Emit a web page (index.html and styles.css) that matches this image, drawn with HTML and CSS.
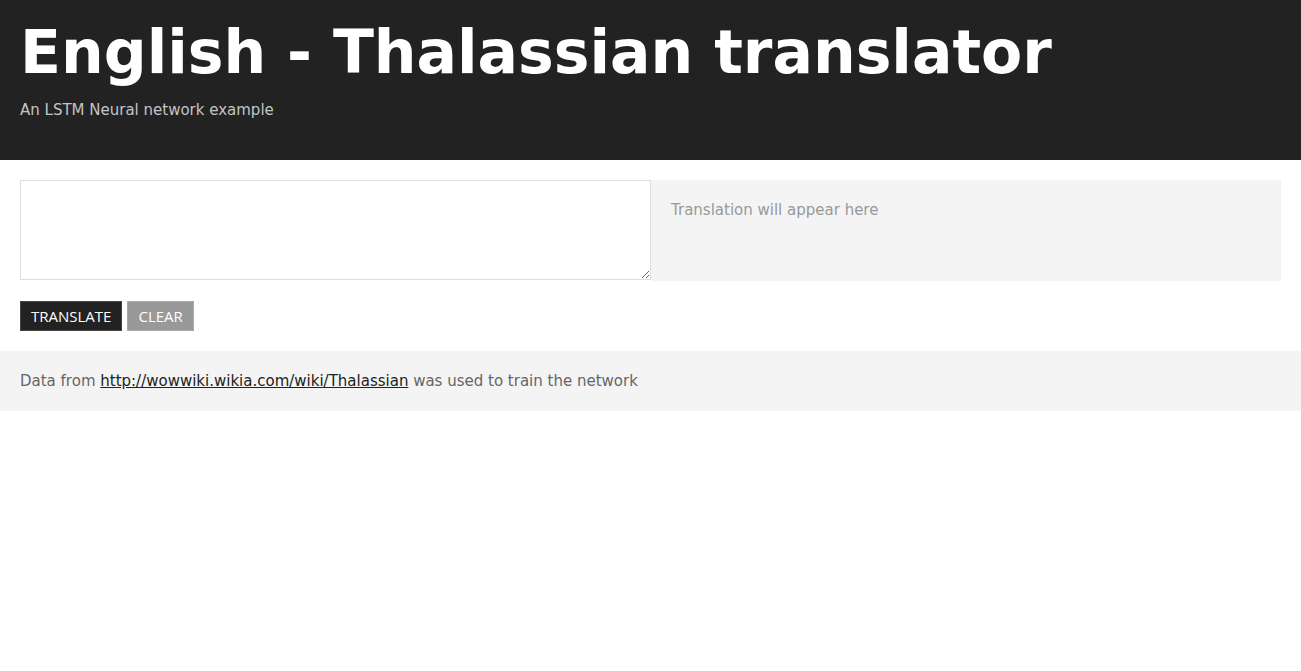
FILE: index.html
```html
<!DOCTYPE html>
<html lang="en">
<head>
<meta charset="utf-8">
<title>English - Thalassian translator</title>
<link rel="stylesheet" href="styles.css">
</head>
<body>
<header class="hero">
  <h1 class="title">English - Thalassian translator</h1>
  <p class="subtitle">An LSTM Neural network example</p>
</header>
<main class="main">
  <div class="panes">
    <textarea class="input"></textarea>
    <div class="output">Translation will appear here</div>
  </div>
  <div class="actions">
    <button class="btn btn-dark">TRANSLATE</button>
    <button class="btn btn-gray">CLEAR</button>
  </div>
</main>
<footer class="footer">
  <p class="footer-text">Data from <a href="#" class="link">http://wowwiki.wikia.com/wiki/Thalassian</a> was used to train the network</p>
</footer>
</body>
</html>
```
FILE: styles.css
```css
* { box-sizing: border-box; }
body {
  margin: 0;
  font-family: "DejaVu Sans", sans-serif;
  font-size: 15px;
  background: #fff;
}
.hero {
  background: #222;
  height: 160px;
  padding: 14px 20px 0;
}
.title {
  margin: 0;
  color: #fff;
  font-size: 60px;
  font-weight: bold;
  line-height: 76px;
}
.subtitle {
  margin: 10px 0 0;
  color: #c4c4c4;
  font-size: 15px;
  line-height: 20px;
}
.main {
  padding: 20px;
}
.panes {
  display: grid;
  grid-template-columns: 631px 1fr;
  align-items: start;
}
.input {
  width: 100%;
  height: 100px;
  margin: 0;
  border: 1px solid #ddd;
  font-family: "DejaVu Sans", sans-serif;
  font-size: 15px;
  padding: 10px;
}
.output {
  height: 101px;
  background: #f4f4f4;
  padding: 20px;
  color: #999;
  line-height: 20px;
}
.actions {
  display: flex;
  gap: 5px;
  margin-top: 20px;
}
.btn {
  height: 30px;
  padding: 0 10px;
  font-family: "Open Sans", sans-serif;
  font-size: 15px;
  color: #fff;
  cursor: pointer;
}
.btn-dark {
  background: #222;
  border: 1px solid #444;
}
.btn-gray {
  background: #999;
  border: 1px solid #aaa;
}
.footer {
  background: #f4f4f4;
  padding: 20px;
}
.footer-text {
  margin: 0;
  color: #666;
  line-height: 20px;
}
.link {
  color: #222;
  text-decoration: underline;
}
```
